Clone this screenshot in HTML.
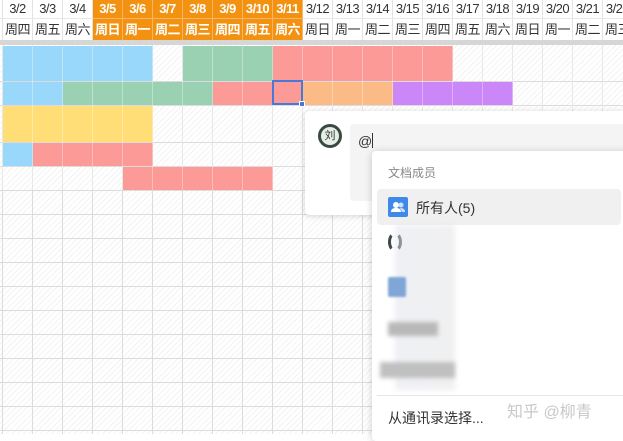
<!DOCTYPE html><html><head><meta charset="utf-8"><style>
*{margin:0;padding:0;box-sizing:border-box}
body{width:623px;height:434px;overflow:hidden;position:relative;background:#fff;font-family:"Liberation Sans","Noto Sans CJK SC",sans-serif}
.a{position:absolute}
.grid{left:0;top:45px;width:623px;height:389px;background:
linear-gradient(90deg,#dcdcdc 1px,transparent 1px) 2px 0/30px 100%,
repeating-linear-gradient(135deg,#fff 0 3px,#f3f3f3 3px 4px)}
.h{left:0;width:623px;height:1px;background:#dcdcdc}
.hd{top:0;height:40px;width:30px;border-right:1px solid #e2e2e2;font-size:13px;color:#333;text-align:center;letter-spacing:-0.5px;white-space:nowrap}
.hd div{height:18px;line-height:18px}
.hd div+div{height:22px;line-height:22px;border-top:1px solid #e8e8e8}
.hd.o{background:#f39211;color:#fff;font-weight:bold;border-right:1px solid #f7b56a}
.hd.o div+div{border-top:1px solid #f7b56a}
.vl{left:0;top:45px;width:623px;height:145px;background:linear-gradient(90deg,rgba(255,255,255,.35) 1px,transparent 1px) 2px 0/30px 100%}
</style></head><body>
<div class="a grid"></div>
<div class="a h" style="top:81px"></div><div class="a h" style="top:105px"></div><div class="a h" style="top:142px"></div><div class="a h" style="top:166px"></div>
<div class="a h" style="top:190px"></div><div class="a h" style="top:214px"></div><div class="a h" style="top:238px"></div><div class="a h" style="top:262px"></div><div class="a h" style="top:286px"></div><div class="a h" style="top:310px"></div><div class="a h" style="top:334px"></div><div class="a h" style="top:358px"></div><div class="a h" style="top:382px"></div><div class="a h" style="top:406px"></div><div class="a h" style="top:430px"></div>
<div class="a" style="left:0;top:40px;width:623px;height:5px;background:#d6d6d6"></div>
<div class="a hd" style="left:-27px;"><div></div><div></div></div>
<div class="a hd" style="left:3px"><div>3/2</div><div>周四</div></div>
<div class="a hd" style="left:33px"><div>3/3</div><div>周五</div></div>
<div class="a hd" style="left:63px"><div>3/4</div><div>周六</div></div>
<div class="a hd o" style="left:93px"><div>3/5</div><div>周日</div></div>
<div class="a hd o" style="left:123px"><div>3/6</div><div>周一</div></div>
<div class="a hd o" style="left:153px"><div>3/7</div><div>周二</div></div>
<div class="a hd o" style="left:183px"><div>3/8</div><div>周三</div></div>
<div class="a hd o" style="left:213px"><div>3/9</div><div>周四</div></div>
<div class="a hd o" style="left:243px"><div>3/10</div><div>周五</div></div>
<div class="a hd o" style="left:273px"><div>3/11</div><div>周六</div></div>
<div class="a hd" style="left:303px"><div>3/12</div><div>周日</div></div>
<div class="a hd" style="left:333px"><div>3/13</div><div>周一</div></div>
<div class="a hd" style="left:363px"><div>3/14</div><div>周二</div></div>
<div class="a hd" style="left:393px"><div>3/15</div><div>周三</div></div>
<div class="a hd" style="left:423px"><div>3/16</div><div>周四</div></div>
<div class="a hd" style="left:453px"><div>3/17</div><div>周五</div></div>
<div class="a hd" style="left:483px"><div>3/18</div><div>周六</div></div>
<div class="a hd" style="left:513px"><div>3/19</div><div>周日</div></div>
<div class="a hd" style="left:543px"><div>3/20</div><div>周一</div></div>
<div class="a hd" style="left:573px"><div>3/21</div><div>周二</div></div>
<div class="a hd" style="left:603px"><div>3/22</div><div>周三</div></div>
<div class="a" style="left:3px;top:46px;width:150px;height:35px;background:#99d7fb"></div>
<div class="a" style="left:183px;top:46px;width:90px;height:35px;background:#99d1b2"></div>
<div class="a" style="left:273px;top:46px;width:180px;height:35px;background:#fb9a97"></div>
<div class="a" style="left:3px;top:82px;width:60px;height:23px;background:#99d7fb"></div>
<div class="a" style="left:63px;top:82px;width:150px;height:23px;background:#99d1b2"></div>
<div class="a" style="left:213px;top:82px;width:90px;height:23px;background:#fb9a97"></div>
<div class="a" style="left:303px;top:82px;width:90px;height:23px;background:#fbbb86"></div>
<div class="a" style="left:393px;top:82px;width:120px;height:23px;background:#cb87f8"></div>
<div class="a" style="left:3px;top:106px;width:150px;height:36px;background:#ffdd77"></div>
<div class="a" style="left:3px;top:143px;width:30px;height:23px;background:#99d7fb"></div>
<div class="a" style="left:33px;top:143px;width:120px;height:23px;background:#fb9a97"></div>
<div class="a" style="left:123px;top:167px;width:150px;height:23px;background:#fb9a97"></div>
<div class="a vl"></div>
<div class="a" style="left:272px;top:80px;width:31px;height:25px;border:2px solid #4a78d6"></div>
<div class="a" style="left:299px;top:101px;width:6px;height:6px;background:#4a78d6;border:1px solid #fff"></div>
<div class="a" style="left:305px;top:111px;width:330px;height:104px;background:#fff;border-radius:4px;box-shadow:0 1px 6px rgba(0,0,0,.18)"></div>
<div class="a" style="left:318px;top:124px;width:24px;height:24px;border-radius:50%;background:#e6eee8;border:3px solid #3a4a40;font-size:11px;text-align:center;line-height:18px;color:#333">刘</div>
<div class="a" style="left:350px;top:124px;width:280px;height:77px;background:#f4f4f4;border-radius:4px"></div>
<div class="a" style="left:358px;top:133px;font-size:14px;color:#333">@<span style="display:inline-block;width:1px;height:15px;background:#333;vertical-align:-2px"></span></div>
<div class="a" style="left:372px;top:151px;width:260px;height:290px;background:#fff;border-radius:4px;box-shadow:0 1px 8px rgba(0,0,0,.2)"></div>
<div class="a" style="left:388px;top:164px;font-size:12px;color:#888">文档成员</div>
<div class="a" style="left:377px;top:189px;width:244px;height:36px;background:#f0f0f0;border-radius:4px"></div>
<div class="a" style="left:388px;top:197px;width:20px;height:20px;background:#3f8ae8;border-radius:2px"><svg width="20" height="20"><circle cx="8" cy="8" r="3" fill="#fff"/><path d="M3 15c0-3 2-4 5-4s5 1 5 4z" fill="#fff"/><circle cx="13" cy="8" r="2.5" fill="#cfe1fa"/><path d="M12 11c3 0 5 1 5 4h-3z" fill="#cfe1fa"/></svg></div>
<div class="a" style="left:416px;top:198px;font-size:14px;color:#333">所有人(5)</div>
<div class="a" style="left:388px;top:232px;width:14px;height:20px;border:3px solid #3a4a40;border-radius:50%;border-top-color:transparent;border-bottom-color:transparent"></div>
<div class="a" style="left:395px;top:225px;width:60px;height:165px;background:linear-gradient(90deg,rgba(220,225,235,.5),rgba(230,230,230,.6));filter:blur(3px)"></div>
<div class="a" style="left:388px;top:277px;width:18px;height:20px;background:#7fa6d6;border-radius:2px;filter:blur(1px)"></div>
<div class="a" style="left:388px;top:322px;width:50px;height:14px;background:#b8b8b8;filter:blur(2px)"></div>
<div class="a" style="left:380px;top:362px;width:75px;height:16px;background:#c0c0c0;filter:blur(2px)"></div>
<div class="a" style="left:377px;top:395px;width:250px;height:1px;background:#e6e6e6"></div>
<div class="a" style="left:388px;top:408px;font-size:14px;color:#333">从通讯录选择...</div>
<div class="a" style="left:507px;top:398px;font-size:16px;color:#c8c8c8">知乎 @柳青</div>
</body></html>
